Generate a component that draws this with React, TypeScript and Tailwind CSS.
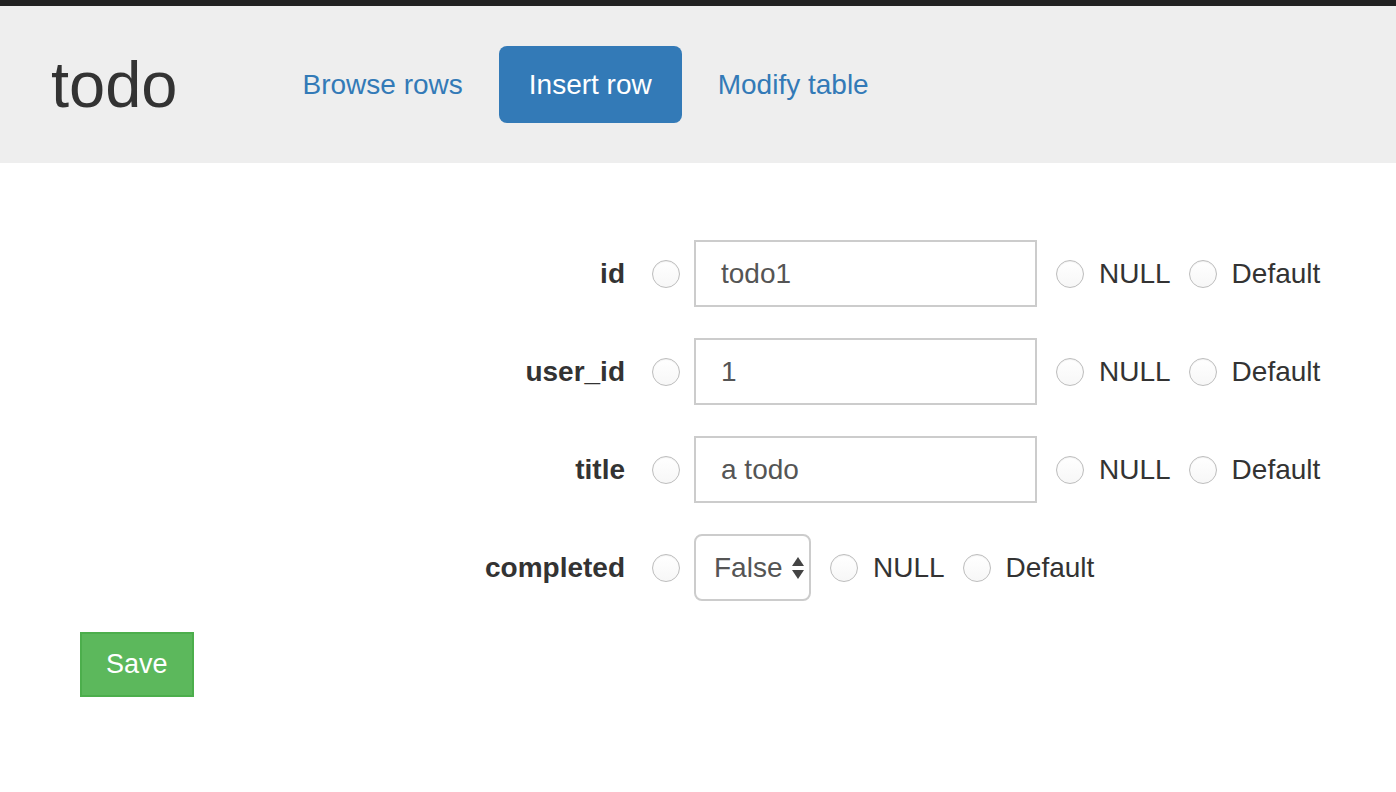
import React from "react";

const font = { fontFamily: '"Liberation Sans", Arial, Helvetica, sans-serif' };

function Radio() {
  return (
    <span className="block w-[28px] h-[28px] shrink-0 rounded-full border border-[#bdbdbd] bg-gradient-to-b from-white to-[#f7f7f7] shadow-[inset_0_1px_1px_rgba(0,0,0,0.06)]" />
  );
}

function Choice({ label }: { label: string }) {
  return (
    <div className="flex items-center gap-[15px] shrink-0">
      <Radio />
      <span className="text-[28px] leading-none text-[#333] whitespace-nowrap">{label}</span>
    </div>
  );
}

function Row({ label, children }: { label: string; children: React.ReactNode }) {
  return (
    <div className="flex items-center h-[67px]">
      <div className="w-[145px] shrink-0 text-right text-[28px] font-bold text-[#333] leading-none">{label}</div>
      <div className="ml-[27px] shrink-0 flex items-center">
        <Radio />
      </div>
      <div className="ml-[14px] shrink-0 flex items-center">{children}</div>
    </div>
  );
}

function TextField({ value }: { value: string }) {
  return (
    <div className="flex items-center gap-[19px]">
      <div className="w-[343px] h-[67px] shrink-0 border-2 border-[#cccccc] bg-white flex items-center pl-[25px] text-[28px] text-[#555]">
        {value}
      </div>
      <div className="flex items-center gap-[18px]">
        <Choice label="NULL" />
        <Choice label="Default" />
      </div>
    </div>
  );
}

export default function App() {
  return (
    <div className="min-h-[792px] bg-white" style={font}>
      <div className="h-[6px] bg-[#222]" />
      <div className="h-[157px] bg-[#eeeeee] flex items-center pl-[51px]">
        <div className="text-[65px] leading-none text-[#333]">todo</div>
        <nav className="ml-[95px] flex items-center gap-[6px]">
          <a className="h-[77px] px-[30px] flex items-center text-[28px] text-[#337ab7] rounded-[8px]">Browse rows</a>
          <a className="h-[77px] px-[30px] flex items-center text-[28px] text-white bg-[#337ab7] rounded-[8px]">Insert row</a>
          <a className="h-[77px] px-[30px] flex items-center text-[28px] text-[#337ab7] rounded-[8px]">Modify table</a>
        </nav>
      </div>
      <div className="pt-[77px] px-[80px]">
        <div className="ml-[400px] flex flex-col gap-[31px]">
          <Row label="id">
            <TextField value="todo1" />
          </Row>
          <Row label="user_id">
            <TextField value="1" />
          </Row>
          <Row label="title">
            <TextField value="a todo" />
          </Row>
          <Row label="completed">
            <div className="flex items-center gap-[19px]">
              <div className="w-[117px] h-[67px] shrink-0 border-2 border-[#cccccc] rounded-[8px] bg-white flex items-center pl-[18px] gap-[9px] text-[28px] text-[#555]">
                <span>False</span>
                <svg width="14" height="26" viewBox="0 0 14 26" className="shrink-0">
                  <path d="M7 2 L13 11 L1 11 Z" fill="#444" />
                  <path d="M1 15 L13 15 L7 24 Z" fill="#444" />
                </svg>
              </div>
              <div className="flex items-center gap-[18px]">
                <Choice label="NULL" />
                <Choice label="Default" />
              </div>
            </div>
          </Row>
        </div>
        <div className="mt-[31px]">
          <button className="h-[65px] px-[24px] bg-[#5cb85c] border-2 border-[#4cae4c] text-white text-[27px] leading-none">
            Save
          </button>
        </div>
      </div>
    </div>
  );
}
